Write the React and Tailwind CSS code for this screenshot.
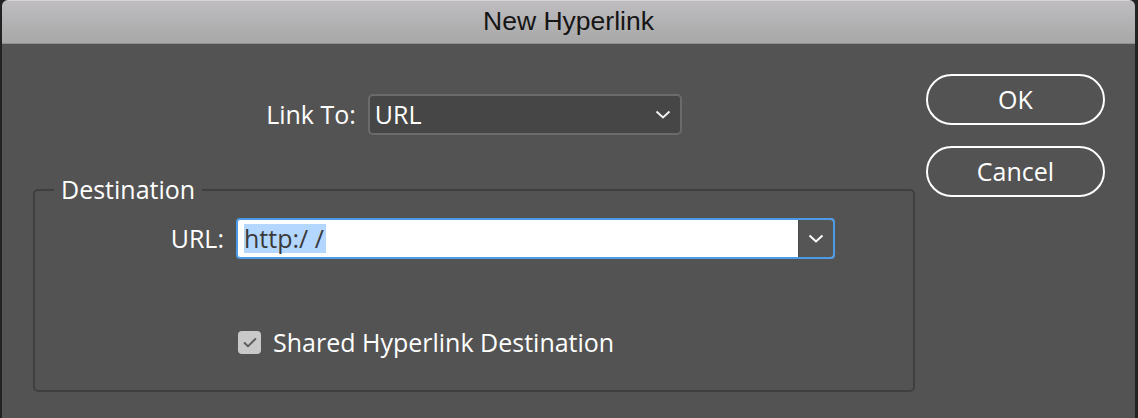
import { Check } from "lucide-react";

function Chevron({ className }) {
  return (
    <svg width="16" height="9" viewBox="0 0 16 9" className={className}>
      <path d="M1.5 1.5 L8 7.5 L14.5 1.5" fill="none" stroke="currentColor" strokeWidth="2" />
    </svg>
  );
}

export default function App() {
  const body = { fontFamily: '"Open Sans", "Noto Sans", sans-serif' };

  return (
    <div className="w-[1138px] h-[418px] bg-[#222222] flex pl-[2px] pr-[3px] overflow-hidden">
      <div className="flex-1 flex flex-col rounded-t-[6px] overflow-hidden">
        {/* Title bar */}
        <div
          className="h-[44px] shrink-0 bg-gradient-to-b from-[#bebcbf] to-[#a8a8a8] border-t border-[#d6d4d7] border-b border-b-[#8f8f8f] flex items-center justify-center text-[26.5px] text-[#151515]"
          style={{ fontFamily: '"Liberation Sans", Arial, sans-serif' }}
        >
          New Hyperlink
        </div>

        {/* Body */}
        <div className="flex-1 bg-[#535353] flex pl-[31px] text-white font-medium text-[25px]" style={body}>
          <div className="w-[882px] flex flex-col">
            {/* Link To row */}
            <div className="mt-[50px] flex items-center justify-center gap-[12px]">
              <span className="leading-none">Link To:</span>
              <div className="w-[314px] h-[41px] rounded-[5px] border-2 border-[#6b6b6b] bg-[#464646] flex items-center justify-between pl-[5px] pr-[9px]">
                <span className="leading-none">URL</span>
                <Chevron className="text-[#f2f2f2]" />
              </div>
            </div>

            {/* Destination group */}
            <div className="relative mt-[54px] h-[203px] border-2 border-[#3f3f3f] rounded-[5px]">
              <span className="absolute left-[19px] -top-[17px] px-[7px] bg-[#535353] leading-[30px]">
                Destination
              </span>

              <div className="mt-[27px] flex items-center">
                <span className="w-[189px] text-right leading-none">URL:</span>
                <div className="ml-[12px] w-[599px] h-[41px] rounded-[4px] border-2 border-[#4b9be6] bg-white flex overflow-hidden">
                  <div className="flex-1 flex items-center pl-[6px]">
                    <span className="bg-[#b3d7ff] text-[#3a3a3a] leading-[29px] pr-[2px]">
                      http:/ /
                    </span>
                  </div>
                  <div className="w-[35px] bg-[#555555] border-l border-[#4a4a4a] flex items-center justify-center">
                    <Chevron className="text-white" />
                  </div>
                </div>
              </div>

              <div className="mt-[71px] ml-[203px] flex items-center gap-[12px]">
                <div className="w-[23px] h-[23px] rounded-[4px] bg-[#c9c9c9] flex items-center justify-center">
                  <Check size={16} strokeWidth={3} className="text-[#5e5e5e]" />
                </div>
                <span className="leading-none">Shared Hyperlink Destination</span>
              </div>
            </div>
          </div>

          {/* Buttons */}
          <div className="ml-[11px] mt-[30px] flex flex-col gap-[21px]">
            <button className="w-[179px] h-[51px] rounded-full border-2 border-white text-white">
              OK
            </button>
            <button className="w-[179px] h-[51px] rounded-full border-2 border-white text-white">
              Cancel
            </button>
          </div>
        </div>
      </div>
    </div>
  );
}
